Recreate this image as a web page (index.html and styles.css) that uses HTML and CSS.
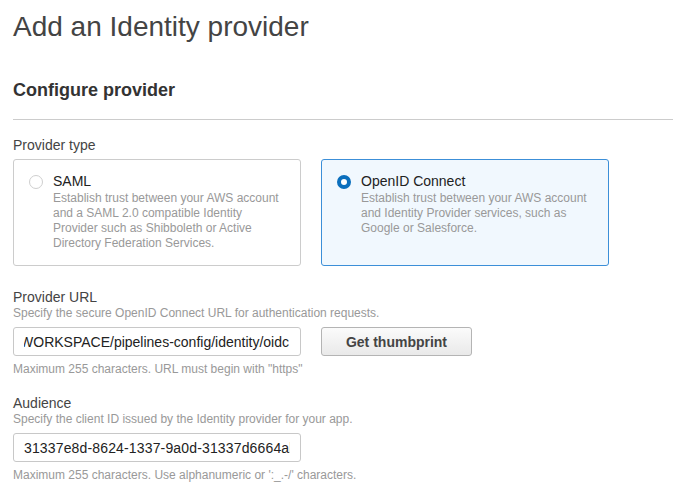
FILE: index.html
```html
<!DOCTYPE html>
<html lang="en">
<head>
    <meta charset="UTF-8">
    <meta name="viewport" content="width=device-width, initial-scale=1.0">
    <title>Add an Identity provider</title>
    <link rel="stylesheet" href="styles.css">
</head>
<body>
    <div class="page">
        <h1 class="title">Add an Identity provider</h1>

        <h2 class="section-title">Configure provider</h2>
        <div class="divider"></div>

        <div class="field">
            <div class="label">Provider type</div>
            <div class="choices">
                <div class="choice">
                    <span class="radio"></span>
                    <div class="choice-body">
                        <div class="choice-name">SAML</div>
                        <div class="choice-desc">Establish trust between your AWS account and a SAML 2.0 compatible Identity Provider such as Shibboleth or Active Directory Federation Services.</div>
                    </div>
                </div>
                <div class="choice selected">
                    <span class="radio"></span>
                    <div class="choice-body">
                        <div class="choice-name">OpenID Connect</div>
                        <div class="choice-desc">Establish trust between your AWS account and Identity Provider services, such as Google or Salesforce.</div>
                    </div>
                </div>
            </div>
        </div>

        <div class="field spaced">
            <div class="label">Provider URL</div>
            <div class="hint">Specify the secure OpenID Connect URL for authentication requests.</div>
            <div class="input-row">
                <div class="input">
                    <div class="value end"><span>https://app.example.io/WORKSPACE/pipelines-config/identity/oidc</span></div>
                </div>
                <button class="button">Get thumbprint</button>
            </div>
            <div class="hint below">Maximum 255 characters. URL must begin with "https"</div>
        </div>

        <div class="field spaced">
            <div class="label">Audience</div>
            <div class="hint">Specify the client ID issued by the Identity provider for your app.</div>
            <div class="input-row">
                <div class="input">
                    <div class="value"><span>31337e8d-8624-1337-9a0d-31337d6664ab</span></div>
                </div>
            </div>
            <div class="hint below">Maximum 255 characters. Use alphanumeric or ':_.-/' characters.</div>
        </div>
    </div>
</body>
</html>
```

FILE: styles.css
```css
body {
    margin: 0;
    background: #fff;
    font-family: "Liberation Sans", Arial, sans-serif;
    color: #444;
}

.page {
    padding: 11px 0 0 13px;
}

.title {
    margin: 0;
    font-size: 28px;
    line-height: 32px;
    font-weight: normal;
    color: #444;
}

.section-title {
    margin: 36px 0 0;
    font-size: 18px;
    line-height: 22px;
    font-weight: bold;
    color: #333;
}

.divider {
    margin-top: 18px;
    height: 1px;
    background: #ccc;
}

.field {
    margin-top: 17px;
}

.field.spaced {
    margin-top: 23px;
}

.field.spaced + .field.spaced {
    margin-top: 18px;
}

.label {
    font-size: 14px;
    line-height: 17px;
    color: #444;
}

.field:first-of-type .label {
    line-height: 18px;
}

.choices {
    display: grid;
    grid-template-columns: 288px 288px;
    gap: 20px;
    margin-top: 5px;
}

.choice {
    display: flex;
    gap: 10px;
    padding: 12px 16px 14px 15px;
    border: 1px solid #ccc;
    border-radius: 3px;
    background: #fff;
}

.choice.selected {
    border-color: #3c8fd8;
    background: #f1f8fe;
}

.radio {
    flex: none;
    box-sizing: border-box;
    width: 14px;
    height: 14px;
    margin-top: 3px;
    border: 1px solid #cfcfcf;
    border-radius: 50%;
    background: #fff;
}

.choice.selected .radio {
    border: 4px solid #0b6fbd;
}

.choice-name {
    font-size: 14px;
    line-height: 18px;
    color: #222;
}

.choice-desc {
    margin-top: 1px;
    font-size: 12px;
    line-height: 15px;
    color: #999;
}

.hint {
    font-size: 12px;
    line-height: 15px;
    color: #999;
}

.hint.below {
    margin-top: 6px;
}

.input-row {
    display: flex;
    gap: 20px;
    margin-top: 6px;
}

.input {
    box-sizing: border-box;
    display: flex;
    align-items: center;
    width: 288px;
    height: 29px;
    padding: 0 10px;
    border: 1px solid #c8c8c8;
    border-radius: 3px;
    background: #fff;
}

.value {
    display: flex;
    flex: 1;
    min-width: 0;
    overflow: hidden;
    white-space: nowrap;
    font-size: 14px;
    letter-spacing: 0.15px;
    color: #222;
}

.value.end {
    justify-content: flex-end;
    padding-right: 1px;
    letter-spacing: 0;
}

.button {
    box-sizing: border-box;
    width: 151px;
    height: 29px;
    border: 1px solid #b4b4b4;
    border-radius: 3px;
    background: linear-gradient(#fbfbfb, #e9e9e9);
    font-family: "Liberation Sans", Arial, sans-serif;
    font-size: 14px;
    font-weight: bold;
    color: #444;
    cursor: pointer;
}
```
